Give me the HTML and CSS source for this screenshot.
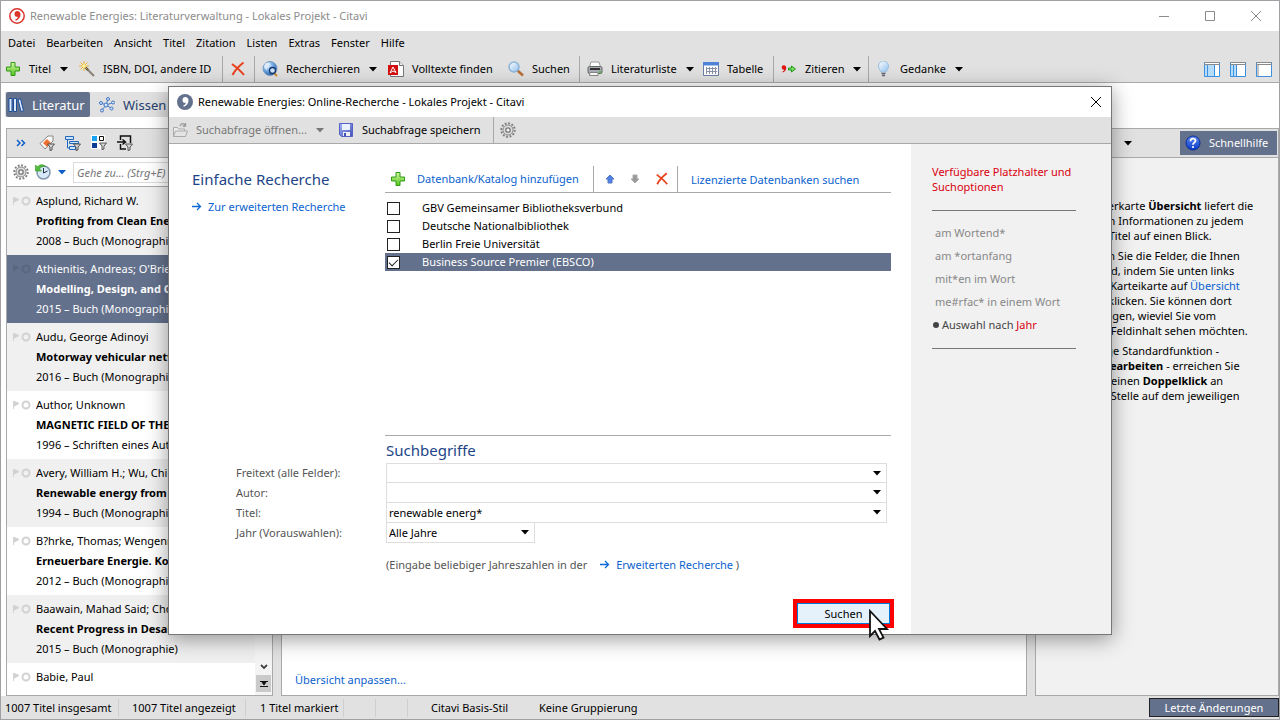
FILE: index.html
```html
<!DOCTYPE html>
<html lang="de">
<head>
    <meta charset="UTF-8">
    <meta name="viewport" content="width=device-width, initial-scale=1.0">
    <title>Citavi</title>
    <link rel="stylesheet" href="styles.css">
</head>
<body>
    <!-- shared icons -->
    <svg class="sprite" width="0" height="0">
        <defs>
            <linearGradient id="green" x1="0" y1="0" x2="0" y2="1"><stop offset="0" stop-color="#d5f7a0"/><stop offset="1" stop-color="#52c41e"/></linearGradient>
            <linearGradient id="glass" x1="0" y1="0" x2="1" y2="1"><stop offset="0" stop-color="#ffffff"/><stop offset="1" stop-color="#8fc1ee"/></linearGradient>
            <radialGradient id="globe" cx="0.35" cy="0.3" r="0.8"><stop offset="0" stop-color="#e8f4ff"/><stop offset="0.5" stop-color="#6ba4e0"/><stop offset="1" stop-color="#1c4f9c"/></radialGradient>
            <linearGradient id="help" x1="0" y1="0" x2="0" y2="1"><stop offset="0" stop-color="#5d8bf0"/><stop offset="1" stop-color="#0838c8"/></linearGradient>
            <linearGradient id="disk" x1="0" y1="0" x2="1" y2="1"><stop offset="0" stop-color="#a9b4f5"/><stop offset="1" stop-color="#4350b8"/></linearGradient>
        </defs>
        <symbol id="i-plus" viewBox="0 0 16 16"><path d="M6 1.500h4v4.500h4.500v4H10v4.500H6V10H1.500V6H6z" fill="url(#green)" stroke="#2f9a17"/></symbol>
        <symbol id="i-cross" viewBox="0 0 16 16"><path d="M2 3C6 6 10 9 14 14M13.500 1.500C9 5 5 9 2.500 14" fill="none" stroke="#e9401c" stroke-width="2"/></symbol>
        <symbol id="i-caret" viewBox="0 0 8 5"><path d="M0 0h8L4 4.500z" fill="currentColor"/></symbol>
        <symbol id="i-funnel" viewBox="0 0 8 8"><path d="M.5 1h7L5 4v3L3 7.500V4z" fill="#d8d8d8" stroke="#555"/></symbol>
        <symbol id="i-flag" viewBox="0 0 18 10"><path d="M.5 1v8M1.500 1.500L6 3.500 1.500 6z" fill="currentColor" stroke="currentColor"/><circle cx="13" cy="5" r="3.500" fill="none" stroke="currentColor" stroke-width="2"/></symbol>
        <symbol id="i-arrow" viewBox="0 0 10 9"><path d="M0 4.500h8.500M5 1l3.500 3.500L5 8" fill="none" stroke="#0b6ad8" stroke-width="1.300"/></symbol>
        <symbol id="i-gear" viewBox="0 0 16 16"><circle cx="8" cy="8" r="6.700" fill="none" stroke="#808080" stroke-width="2" stroke-dasharray="1.900 1.600"/><circle cx="8" cy="8" r="5" fill="#dedede" stroke="#8a8a8a"/><circle cx="8" cy="8" r="2.200" fill="#f6f6f6" stroke="#777" stroke-width="1.300"/></symbol>
        <symbol id="i-comma" viewBox="0 0 8 10"><path d="M3.700 0C5.800 0 7 1.500 7 3.500 7 6.300 5.200 8.600 2.300 9.700L1.700 8.800C3.300 8 4.200 7 4.400 5.800 2.300 6.200 1 4.900 1 2.900 1 1.200 2.200 0 3.700 0z" fill="currentColor"/></symbol>
    </svg>

    <div class="window">
        <header class="titlebar inactive">
            <svg class="logo" viewBox="0 0 16 16"><circle cx="8" cy="8" r="7.200" fill="#fff" stroke="#d9352b" stroke-width="1.500"/><use href="#i-comma" x="4.500" y="3" width="8" height="10" color="#d9352b"/></svg>
            <span class="caption">Renewable Energies: Literaturverwaltung - Lokales Projekt - Citavi</span>
            <div class="window-buttons">
                <button aria-label="Minimieren"><svg viewBox="0 0 10 10"><path d="M0 5.500h10"/></svg></button>
                <button aria-label="Maximieren"><svg viewBox="0 0 10 10"><path d="M.5.5h9v9h-9z"/></svg></button>
                <button aria-label="Schließen"><svg viewBox="0 0 10 10"><path d="M0 0l10 10M10 0L0 10"/></svg></button>
            </div>
        </header>

        <nav class="menubar">
            <button>Datei</button><button>Bearbeiten</button><button>Ansicht</button><button>Titel</button><button>Zitation</button><button>Listen</button><button>Extras</button><button>Fenster</button><button>Hilfe</button>
        </nav>

        <div class="toolbar">
            <button class="tool first"><svg class="icon"><use href="#i-plus"/></svg>Titel<svg class="caret"><use href="#i-caret"/></svg></button>
            <button class="tool split">
                <svg class="icon" viewBox="0 0 16 16"><path d="M7 7l8 8" stroke="#8a8378" stroke-width="2.200"/><path d="M6 6l3 3" stroke="#444" stroke-width="2"/><path d="M5 0v10M0 5h10M1.500 1.500l7 7M8.500 1.500l-7 7" stroke="#eeb52a"/><circle cx="5" cy="5" r="1.800" fill="#fff3a0"/></svg>ISBN, DOI, andere ID
            </button>
            <button class="tool split" aria-label="Löschen"><svg class="icon"><use href="#i-cross"/></svg></button>
            <button class="tool">
                <svg class="icon" viewBox="0 0 16 16"><circle cx="8" cy="7.500" r="7" fill="url(#globe)" stroke="#7b9cc5"/><path d="M3 3c2-2 5-1 5 0S5 6 5 8 3 8 2 6z" fill="#dcebfa"/><path d="M12 12l3 3" stroke="#c98a2b" stroke-width="2"/><circle cx="10.500" cy="9.500" r="3" fill="#cfe4f8" stroke="#123a70" stroke-width="1.300"/></svg>Recherchieren<svg class="caret"><use href="#i-caret"/></svg>
            </button>
            <button class="tool">
                <svg class="icon" viewBox="0 0 16 16"><path d="M2.500.5h9l4 4v11h-13z" fill="#fff" stroke="#777"/><path d="M11.500.5v4h4" fill="#eee" stroke="#777"/><path d="M0 4h10v10H0z" fill="#d50f0f"/><path d="M5 6l-3 6 3-2 3 1.500z" fill="none" stroke="#fff"/></svg>Volltexte finden
            </button>
            <button class="tool split">
                <svg class="icon" viewBox="0 0 16 16"><path d="M9.500 9.500l5.500 5" stroke="#b9703a" stroke-width="2.600"/><circle cx="6" cy="6" r="5" fill="url(#glass)" stroke="#8db4da" stroke-width="1.500"/></svg>Suchen
            </button>
            <button class="tool">
                <svg class="icon" viewBox="0 0 16 16"><path d="M4 1h8l1.500 5H2.500z" fill="#fff" stroke="#999"/><rect x="1" y="5.500" width="14" height="7" rx="1.500" fill="#a9adb5" stroke="#666"/><path d="M3 8h10" stroke="#333" stroke-width="2"/><path d="M3 11.500h8v3H2.500z" fill="#fff" stroke="#888"/><circle cx="13" cy="11" r="1" fill="#3bc43b"/></svg>Literaturliste<svg class="caret"><use href="#i-caret"/></svg>
            </button>
            <button class="tool split">
                <svg class="icon" viewBox="0 0 16 16"><path d="M.5 1.500h15v13H.5z" fill="#fff" stroke="#6d7fa5"/><path d="M0 1h16v3.500H0z" fill="#4f83d8"/><path d="M3 7.500h11M3 10.500h11M3.500 6v7M6.500 6v7M9.500 6v7M12.500 6v7" stroke="#8a93a5"/></svg>Tabelle
            </button>
            <button class="tool split">
                <svg class="icon" viewBox="0 0 16 16"><use href="#i-comma" x="0" y="4" width="6" height="8" color="#e01515"/><path d="M7.500 7h3V5l4 3-4 3V9h-3z" fill="#7ee06a" stroke="#1f9a14"/></svg>Zitieren<svg class="caret"><use href="#i-caret"/></svg>
            </button>
            <button class="tool">
                <svg class="icon" viewBox="0 0 16 16"><path d="M5 11C4 8.500 2.500 8 2.500 5a4.500 4.500 0 0 1 10 0c0 3-1.500 3.500-2.500 6z" fill="url(#glass)" stroke="#9dbede"/><path d="M5.500 12.500h4M6 14.500h3" stroke="#667" stroke-width="1.500"/></svg>Gedanke<svg class="caret"><use href="#i-caret"/></svg>
            </button>
            <div class="view-buttons">
                <button aria-label="Drei Spalten"><svg class="icon" viewBox="0 0 16 16"><path d="M.5 1.500h15v14H.5z" fill="#fff" stroke="#3d8fe0"/><path d="M0 1.500h16M0 3.500h16" stroke="#8a8a8a"/><path d="M1 4h9v11H1z" fill="#b5dcfa"/><path d="M3.500 4v11M10.500 4v11" stroke="#3d8fe0"/></svg></button>
                <button aria-label="Zwei Spalten"><svg class="icon" viewBox="0 0 16 16"><path d="M.5 1.500h15v14H.5z" fill="#fff" stroke="#3d8fe0"/><path d="M0 1.500h16M0 3.500h16" stroke="#8a8a8a"/><path d="M1 4h5v11H1z" fill="#b5dcfa"/><path d="M3.500 4v11M6.500 4v11" stroke="#3d8fe0"/></svg></button>
                <button aria-label="Eine Spalte"><svg class="icon" viewBox="0 0 16 16"><path d="M.5 1.500h15v14H.5z" fill="#fff" stroke="#3d8fe0"/><path d="M0 1.500h16M0 3.500h16M2 4v11" stroke="#8a8a8a"/></svg></button>
            </div>
        </div>

        <div class="tabs">
            <button class="tab active">
                <svg class="icon" viewBox="0 0 16 16"><path d="M1 1.500h3v13H1zM5.500 1.500h3v13h-3z" fill="#dbe9ff" stroke="#1c4d9a"/><path d="M10 2.500l2.500-.700 3 12-2.500.700z" fill="#dbe9ff" stroke="#1c4d9a"/></svg>Literatur
            </button>
            <button class="tab">
                <svg class="icon" viewBox="0 0 16 16"><path d="M7 8L2 6M7 8l-4 5M7 8l2-6M7 8l6-2M7 8l5 3" stroke="#4b7fc6"/><g fill="#d7e6fa" stroke="#3d74c2"><circle cx="7" cy="8" r="2"/><circle cx="2" cy="6" r="1.500"/><circle cx="3" cy="13.500" r="1.500"/><circle cx="9" cy="2" r="1.500"/><circle cx="14" cy="5.500" r="1.500"/><circle cx="12.500" cy="11.500" r="1.500"/></g></svg>Wissen
            </button>
        </div>

        <main class="workspace">
            <section class="panel titles">
                <div class="panel-bar">
                    <button class="more" aria-label="Mehr"><svg class="icon" viewBox="0 0 16 16"><path d="M4 5l3 3-3 3M8.500 5l3 3-3 3" fill="none" stroke="#0b5fc8" stroke-width="1.500"/></svg></button>
                    <button aria-label="Schlagwörter"><svg class="icon" viewBox="0 0 16 16"><path d="M1 8.500L9 1h5v5l-8 8z" fill="#fafafa" stroke="#888"/><path d="M4 8l4-4 4 4-4 4z" fill="#f07030"/><use href="#i-funnel" x="8" y="8" width="8" height="8"/></svg></button>
                    <button aria-label="Kategorien"><svg class="icon" viewBox="0 0 16 16"><path d="M.5 1.500h8v3h-8zM4.500 6.500h9v2h-9zM4.500 11.500h6v3h-6zM2.500 5v8h2" fill="#cfe3fa" stroke="#2268bd"/><use href="#i-funnel" x="8" y="8" width="8" height="8"/></svg></button>
                    <button aria-label="Gruppen"><svg class="icon" viewBox="0 0 16 16"><path d="M0 0h14v14H0z" fill="#fff"/><path d="M1 1h5v5H1z" fill="#1aa3f0"/><path d="M1 8h5v5H1z" fill="#0a3f94"/><path d="M8.500 1.500h4v4h-4z" fill="#fff" stroke="#111"/><use href="#i-funnel" x="8" y="7" width="8" height="8"/></svg></button>
                    <button aria-label="Importe"><svg class="icon" viewBox="0 0 16 16"><path d="M3.500 5V1h10v7M3.500 9v5H9" fill="none" stroke="#111" stroke-width="1.500"/><path d="M0 7h8M5.500 4.500L8.500 7l-3 2.500" fill="none" stroke="#111" stroke-width="1.500"/><use href="#i-funnel" x="8" y="8" width="8" height="8"/></svg></button>
                </div>
                <div class="goto">
                    <button aria-label="Einstellungen"><svg class="icon"><use href="#i-gear"/></svg></button>
                    <button aria-label="Verlauf"><svg class="icon" viewBox="0 0 16 16"><circle cx="8.500" cy="8.500" r="6.500" fill="#d8e8fa" stroke="#8396ab" stroke-width="1.500"/><path d="M8.500 9V4M8.500 9l4-2" stroke="#234" fill="none"/><path d="M.5 1v6h6L4.500 5c1-2 3-3 6-2.500C8 0 4.500 0 2.500 3z" fill="#54bc3c" stroke="#2c9320" stroke-width=".6"/></svg></button>
                    <button class="history" aria-label="Verlauf öffnen"><svg class="caret"><use href="#i-caret"/></svg></button>
                    <input type="text" placeholder="Gehe zu... (Strg+E)" aria-label="Gehe zu">
                </div>
                <div class="list-area">
                    <ul class="title-list">
                        <li><svg class="flag"><use href="#i-flag"/></svg><div>Asplund, Richard W.<br><b>Profiting from Clean Energy</b><br>2008 – Buch (Monographie)</div></li>
                        <li class="selected"><svg class="flag"><use href="#i-flag"/></svg><div>Athienitis, Andreas; O'Brien, William<br><b>Modelling, Design, and Optimization</b><br>2015 – Buch (Monographie)</div></li>
                        <li><svg class="flag"><use href="#i-flag"/></svg><div>Audu, George Adinoyi<br><b>Motorway vehicular networks</b><br>2016 – Buch (Monographie)</div></li>
                        <li><svg class="flag"><use href="#i-flag"/></svg><div>Author, Unknown<br><b>MAGNETIC FIELD OF THE SUN</b><br>1996 – Schriften eines Autors</div></li>
                        <li><svg class="flag"><use href="#i-flag"/></svg><div>Avery, William H.; Wu, Chih<br><b>Renewable energy from the ocean</b><br>1994 – Buch (Monographie)</div></li>
                        <li><svg class="flag"><use href="#i-flag"/></svg><div>B?hrke, Thomas; Wengenmayr, Roland<br><b>Erneuerbare Energie. Konzepte</b><br>2012 – Buch (Monographie)</div></li>
                        <li><svg class="flag"><use href="#i-flag"/></svg><div>Baawain, Mahad Said; Choudri, B. S.<br><b>Recent Progress in Desalination</b><br>2015 – Buch (Monographie)</div></li>
                        <li><svg class="flag"><use href="#i-flag"/></svg><div>Babie, Paul</div></li>
                    </ul>
                    <div class="scrollbar">
                        <button aria-label="Nach unten"><svg viewBox="0 0 8 6"><path d="M1 1l3 3 3-3" fill="none" stroke="#444" stroke-width="1.800"/></svg></button>
                        <button class="end" aria-label="Zum Ende"><svg viewBox="0 0 8 6"><path d="M0 .5h8M0 5.500h8M2 1h4L4 4z" fill="#111" stroke="#111"/></svg></button>
                    </div>
                </div>
            </section>

            <section class="panel overview">
                <a href="#">Übersicht anpassen...</a>
            </section>

            <section class="panel quickhelp">
                <div class="panel-bar">
                    <button class="drop" aria-label="Mehr"><svg class="caret"><use href="#i-caret"/></svg></button>
                    <button class="help-button"><svg class="icon" viewBox="0 0 16 16"><circle cx="8" cy="8" r="7" fill="url(#help)" stroke="#0a2c9c"/><path d="M5.500 6.200c0-3.400 5-3.400 5-.4 0 1.800-2.500 1.800-2.500 4" fill="none" stroke="#fff" stroke-width="1.800"/><circle cx="8" cy="12" r="1.100" fill="#fff"/></svg>Schnellhilfe</button>
                </div>
                <div class="help-text">
                    <p>Die Registerkarte <b>Übersicht</b> liefert die<br>wichtigsten Informationen zu jedem<br>einzelnen Titel auf einen Blick.</p>
                    <p>Bestimmen Sie die Felder, die Ihnen<br>wichtig sind, indem Sie unten links<br>auf dieser Karteikarte auf <a href="#">Übersicht</a><br>anpassen klicken. Sie können dort<br>auch festlegen, wieviel Sie vom<br>jeweiligen Feldinhalt sehen möchten.</p>
                    <p>Die wichtige Standardfunktion -<br>das Titel-<b>Bearbeiten</b> - erreichen Sie<br>auch über einen <b>Doppelklick</b> an<br>beliebiger Stelle auf dem jeweiligen</p>
                </div>
            </section>
        </main>

        <footer class="statusbar">
            <span class="cell total">1007 Titel insgesamt</span>
            <span class="cell shown">1007 Titel angezeigt</span>
            <span class="cell marked">1 Titel markiert</span>
            <span class="cell blank"></span>
            <span class="cell blank"></span>
            <span class="style-name">Citavi Basis-Stil</span>
            <span>Keine Gruppierung</span>
            <button>Letzte Änderungen</button>
        </footer>
    </div>

    <div class="dialog" role="dialog" aria-label="Online-Recherche">
        <header class="titlebar">
            <svg class="logo" viewBox="0 0 16 16"><circle cx="8" cy="8" r="8" fill="#64718c"/><use href="#i-comma" x="4.500" y="3" width="8" height="10" color="#fff"/></svg>
            <span class="caption">Renewable Energies: Online-Recherche - Lokales Projekt - Citavi</span>
            <div class="window-buttons">
                <button aria-label="Schließen"><svg viewBox="0 0 10 10"><path d="M0 0l10 10M10 0L0 10"/></svg></button>
            </div>
        </header>

        <div class="dialog-bar">
            <button class="tool open-query" disabled>
                <svg class="icon" viewBox="0 0 16 16"><path d="M1.500 14.500v-9h4l1 1.500h6v3" fill="#eee" stroke="#aaa"/><path d="M1.500 14.500l2-5.500h12l-2 5.500z" fill="#e4e4e4" stroke="#aaa"/><path d="M8 4c1-3 4-3 5-.5M13.500 1v3h-3" fill="none" stroke="#999" stroke-width="1.300"/></svg>Suchabfrage öffnen...<svg class="caret"><use href="#i-caret"/></svg>
            </button>
            <button class="tool save-query">
                <svg class="icon" viewBox="0 0 16 16"><path d="M1.500 1.500h13v13h-11l-2-2z" fill="url(#disk)" stroke="#5561c4"/><path d="M4 2h8v6H4z" fill="#e9f2ff"/><path d="M5 10h7v4H5z" fill="#eee"/><path d="M6 11h2v3H6z" fill="#4350b8"/></svg>Suchabfrage speichern
            </button>
            <button class="tool" aria-label="Optionen"><svg class="icon"><use href="#i-gear"/></svg></button>
        </div>

        <div class="dialog-body">
            <form class="search" onsubmit="return false">
                <div class="sources">
                    <div class="mode">
                        <h1>Einfache Recherche</h1>
                        <a href="#"><svg class="arrow"><use href="#i-arrow"/></svg>Zur erweiterten Recherche</a>
                    </div>
                    <div class="databases">
                        <div class="db-bar">
                            <a class="add" href="#"><svg class="icon"><use href="#i-plus"/></svg>Datenbank/Katalog hinzufügen</a>
                            <div class="order">
                                <button aria-label="Nach oben"><svg viewBox="0 0 10 10"><path d="M5 1l4 4H7v4H3V5H1z" fill="#4f82e6" stroke="#5577c4"/></svg></button>
                                <button aria-label="Nach unten"><svg viewBox="0 0 10 10"><path d="M5 9l4-4H7V1H3v4H1z" fill="#999" stroke="#aaa"/></svg></button>
                                <button aria-label="Entfernen"><svg class="icon"><use href="#i-cross"/></svg></button>
                            </div>
                            <a class="licensed" href="#">Lizenzierte Datenbanken suchen</a>
                        </div>
                        <div class="db-list">
                            <label><input type="checkbox">GBV Gemeinsamer Bibliotheksverbund</label>
                            <label><input type="checkbox">Deutsche Nationalbibliothek</label>
                            <label><input type="checkbox">Berlin Freie Universität</label>
                            <label class="selected"><input type="checkbox" checked>Business Source Premier (EBSCO)</label>
                        </div>
                    </div>
                </div>

                <div class="terms">
                    <h2>Suchbegriffe</h2>
                    <label for="free">Freitext (alle Felder):</label>
                    <div class="combo"><input id="free" type="text"><button type="button" aria-label="Freitext-Verlauf"><svg class="caret"><use href="#i-caret"/></svg></button></div>
                    <label for="author">Autor:</label>
                    <div class="combo"><input id="author" type="text"><button type="button" aria-label="Autor-Verlauf"><svg class="caret"><use href="#i-caret"/></svg></button></div>
                    <label for="title">Titel:</label>
                    <div class="combo"><input id="title" type="text" value="renewable energ*"><button type="button" aria-label="Titel-Verlauf"><svg class="caret"><use href="#i-caret"/></svg></button></div>
                    <label for="year">Jahr (Vorauswahlen):</label>
                    <div class="combo year"><select id="year"><option>Alle Jahre</option></select><svg class="caret"><use href="#i-caret"/></svg></div>
                    <p class="note">(Eingabe beliebiger Jahreszahlen in der <a href="#"><svg class="arrow"><use href="#i-arrow"/></svg>Erweiterten Recherche</a> )</p>
                </div>

                <div class="actions">
                    <div class="highlight"><button>Suchen</button>
                        <svg class="pointer" viewBox="0 0 22 32"><path d="M2 2v25l5-5 4.500 8.500 4-2-4.500-8.500h8z" fill="#fff" stroke="#111" stroke-width="1.800"/></svg>
                    </div>
                </div>
            </form>

            <aside class="options">
                <h3>Verfügbare Platzhalter und Suchoptionen</h3>
                <ul>
                    <li>am Wortend*</li>
                    <li>am *ortanfang</li>
                    <li>mit*en im Wort</li>
                    <li>me#rfac* in einem Wort</li>
                    <li class="on">Auswahl nach <em>Jahr</em></li>
                </ul>
            </aside>
        </div>
    </div>
</body>
</html>
```
FILE: styles.css
```css
* {
    margin: 0;
    padding: 0;
    box-sizing: border-box;
}
body {
    position: relative;
    height: 100vh;
    overflow: hidden;
    background: white;
    color: #000;
    font-family: "Noto Sans", "Open Sans", sans-serif;
    font-size: 11px;
    line-height: 20px;
}
button, input, select {
    font: inherit;
    color: inherit;
    background: none;
    border: none;
}
button {
    display: flex;
    align-items: center;
    white-space: nowrap;
}
a {
    color: #0b62cf;
    text-decoration: none;
}
ul {
    list-style: none;
}
.sprite {
    position: absolute;
}
.icon, .logo {
    width: 16px;
    height: 16px;
    flex: none;
}
.caret {
    width: 8px;
    height: 5px;
    flex: none;
}
.arrow {
    width: 10px;
    height: 9px;
    margin-right: 6px;
}

/* main window */
.window {
    display: flex;
    flex-direction: column;
    height: 100%;
    border: 1px solid #a0a0a4;
}
.titlebar {
    display: flex;
    align-items: center;
    height: 30px;
    flex: none;
    padding-left: 8px;
    background: white;
}
.titlebar .caption {
    flex: 1;
    margin-left: 5px;
}
.titlebar.inactive {
    color: #8c8c8c;
}
.window-buttons {
    display: flex;
}
.window-buttons button {
    width: 46px;
    height: 30px;
    justify-content: center;
}
.window-buttons svg {
    width: 10px;
    height: 10px;
    fill: none;
    stroke: currentColor;
}
.dialog .window-buttons button {
    width: 31px;
}
.menubar {
    display: flex;
    gap: 11px;
    padding: 2px 7px 3px;
    background: #e1e1e1;
}
.toolbar {
    display: grid;
    grid-template-columns: 71px 151px 32px 126px 120px 79px 116px 78px 95px 99px 1fr;
    height: 27px;
    flex: none;
    background: #e1e1e1;
    border-bottom: 1px solid #a8aaaa;
}
.tool {
    padding-left: 7px;
}
.tool .icon {
    margin-right: 8px;
}
.tool .caret {
    margin-left: 9px;
}
.tool.first {
    padding-left: 4px;
}
.tool.split {
    border-right: 1px solid #a8aaaa;
}
.view-buttons {
    display: flex;
    justify-content: flex-end;
    gap: 10px;
    padding-right: 7px;
}
.tabs {
    display: flex;
    width: 300px;
    height: 25px;
    flex: none;
    margin: 9px 0 11px 4px;
    background: #e1e1e1;
}
.tab {
    padding: 0 7px 0 2px;
    margin-left: 1px;
    color: #24406e;
    font-size: 13px;
}
.tab .icon {
    margin-right: 8px;
}
.tab.active {
    width: 84px;
    margin-right: 6px;
    background: #64718c;
    border-radius: 2px;
    color: white;
}

/* panels */
.workspace {
    display: grid;
    grid-template-columns: 267px 1fr 244px;
    gap: 8px;
    flex: 1;
    min-height: 0;
    margin-left: 5px;
    background: #e1e1e1;
}
.panel {
    display: flex;
    flex-direction: column;
    min-height: 0;
    overflow: hidden;
    border: 1px solid #a8aaaa;
    background: white;
}
.panel-bar {
    display: flex;
    align-items: center;
    gap: 10px;
    height: 29px;
    flex: none;
    padding-left: 6px;
    background: #e1e1e1;
    border-bottom: 1px solid #a8aaaa;
}
.goto {
    display: flex;
    align-items: center;
    gap: 6px;
    height: 29px;
    flex: none;
    padding-left: 6px;
    border-bottom: 1px solid #a8aaaa;
}
.goto .history {
    color: #0b5fc8;
    margin: 0 1px;
}
.goto input {
    flex: 1;
    min-width: 0;
    height: 21px;
    padding-left: 3px;
    border: 1px solid #dcdcdc;
    font-style: italic;
}
.goto input::placeholder {
    color: #777;
}
.list-area {
    display: flex;
    flex: 1;
    min-height: 0;
}
.title-list {
    flex: 1;
    min-width: 0;
    overflow: hidden;
    white-space: nowrap;
}
.title-list li {
    display: flex;
    padding: 4px 0 4px 6px;
    overflow: hidden;
}
.title-list li:nth-child(odd) {
    background: #f0f0f0;
}
.title-list .flag {
    width: 18px;
    height: 10px;
    flex: none;
    margin: 5px 5px 0 0;
    color: #d2d2d2;
}
.title-list .selected {
    background: #64718c;
    color: white;
}
.title-list .selected .flag {
    color: #5b677f;
}
.scrollbar {
    display: flex;
    flex-direction: column;
    justify-content: flex-end;
    width: 17px;
    padding: 0 1px 3px;
    background: #f4f4f4;
}
.scrollbar button {
    height: 17px;
    justify-content: center;
}
.scrollbar svg {
    width: 8px;
    height: 6px;
}
.scrollbar .end {
    background: #cacaca;
}
.overview {
    justify-content: flex-end;
    padding: 0 13px 5px;
}
.quickhelp {
    background: #f1f1f1;
}
.quickhelp .panel-bar {
    justify-content: flex-end;
    gap: 48px;
    padding-right: 1px;
}
.help-button {
    gap: 8px;
    width: 97px;
    height: 24px;
    padding-left: 5px;
    background: #64718c;
    color: white;
}
.help-text {
    padding: 40px 0 0 20px;
    line-height: 15px;
    white-space: nowrap;
}
.help-text p {
    margin-bottom: 5px;
}
.statusbar {
    display: flex;
    align-items: center;
    height: 23px;
    flex: none;
    padding-left: 4px;
    background: #e1e1e1;
}
.cell {
    height: 18px;
    line-height: 18px;
    border-right: 1px solid #cfcfcf;
}
.total {
    width: 114px;
}
.shown {
    width: 127px;
    padding-left: 13px;
}
.marked {
    width: 98px;
    padding-left: 14px;
}
.blank {
    width: 32px;
}
.style-name {
    width: 108px;
    margin-left: 23px;
}
.statusbar button {
    width: 130px;
    height: 19px;
    justify-content: center;
    margin-left: auto;
    background: #64718c;
    border: 1px solid #222;
    color: white;
}

/* search dialog, floats over the main window */
.dialog {
    position: absolute;
    inset: 86px 168px 85px;
    display: flex;
    flex-direction: column;
    background: white;
    border: 1px solid #777;
    box-shadow: 0 4px 20px rgba(0, 0, 0, 0.4);
}
.dialog-bar {
    display: flex;
    height: 27px;
    flex: none;
    padding-left: 3px;
    background: #e1e1e1;
    border-bottom: 1px solid #a8aaaa;
}
.dialog-bar .tool {
    padding-left: 0;
}
.dialog-bar .open-query {
    width: 166px;
    color: #777;
}
.dialog-bar .save-query {
    width: 156px;
    margin-right: 6px;
    border-right: 1px solid #a8aaaa;
}
.dialog-body {
    display: flex;
    flex: 1;
    min-height: 0;
}
.search {
    display: flex;
    flex-direction: column;
    flex: 1;
    padding: 22px 20px 6px 0;
}
.sources {
    display: flex;
    flex: 1;
}
.mode {
    width: 216px;
    padding: 3px 0 0 23px;
}
h1, h2 {
    color: #1c4587;
    font-size: 15px;
    font-weight: normal;
    line-height: 20px;
}
h1 {
    margin-bottom: 8px;
}
.databases {
    flex: 1;
    border-bottom: 1px solid #a8aaaa;
}
.db-bar {
    display: flex;
    height: 27px;
    border-bottom: 1px solid #a8aaaa;
}
.add {
    display: flex;
    align-items: center;
    gap: 11px;
    width: 209px;
    padding-left: 5px;
    border-right: 1px solid #a8aaaa;
}
.order {
    display: flex;
    gap: 15px;
    width: 84px;
    padding-left: 11px;
    border-right: 1px solid #a8aaaa;
}
.order svg {
    width: 10px;
    height: 10px;
}
.order .icon {
    width: 14px;
    height: 16px;
}
.licensed {
    padding-left: 13px;
    line-height: 27px;
}
.db-list {
    padding-top: 6px;
}
.db-list label {
    display: flex;
    align-items: center;
    gap: 22px;
    height: 18px;
    padding-left: 2px;
}
.db-list .selected {
    background: #64718c;
    color: white;
}
.db-list input {
    appearance: none;
    display: grid;
    place-items: center;
    width: 13px;
    height: 13px;
    border: 1px solid #222;
    background: white;
}
.db-list input:checked::before {
    content: "";
    width: 8px;
    height: 4px;
    margin-bottom: 2px;
    border: solid #222;
    border-width: 0 0 1px 1px;
    transform: rotate(-45deg);
}
.terms {
    display: grid;
    grid-template-columns: 150px 1fr;
    padding: 4px 4px 0 67px;
    color: #555;
}
.terms h2 {
    grid-column: 2;
    height: 23px;
}
.combo {
    display: flex;
    align-items: center;
    height: 20px;
    border: 1px solid #dedede;
    border-top: none;
    color: #000;
}
h2 + label + .combo {
    border-top: 1px solid #dedede;
}
.combo input, .combo select {
    flex: 1;
    min-width: 0;
    height: 19px;
    padding-left: 2px;
    appearance: none;
    outline: none;
}
.combo .caret {
    margin-right: 5px;
}
.combo.year {
    width: 149px;
}
.note {
    grid-column: 2;
    margin-top: 12px;
}
.note a {
    margin-left: 10px;
}
.actions {
    display: flex;
    justify-content: flex-end;
    margin: 24px -3px 0 0;
}
.highlight {
    position: relative;
    border: 4px solid #f00;
}
.highlight button {
    width: 93px;
    height: 21px;
    justify-content: center;
    background: #e5f1fb;
    border: 1px solid #0078d7;
}
.pointer {
    position: absolute;
    top: 6px;
    right: 0;
    width: 22px;
    height: 32px;
}
.options {
    width: 200px;
    padding: 20px 21px;
    background: #f1f1f1;
    color: #888;
}
.options h3 {
    color: #d9000f;
    font-size: 11px;
    font-weight: normal;
    line-height: 15px;
}
.options ul {
    width: 144px;
    margin-top: 16px;
    padding: 10px 0 12px;
    border: solid #777;
    border-width: 1px 0;
}
.options li {
    height: 23px;
    padding-left: 3px;
    line-height: 23px;
    white-space: nowrap;
}
.options .on {
    padding-left: 0;
    color: #444;
}
.options .on::before {
    content: "";
    display: inline-block;
    width: 6px;
    height: 6px;
    margin: 0 3px 1px 1px;
    border-radius: 50%;
    background: #444;
}
.options em {
    color: #d9000f;
    font-style: normal;
}
```
